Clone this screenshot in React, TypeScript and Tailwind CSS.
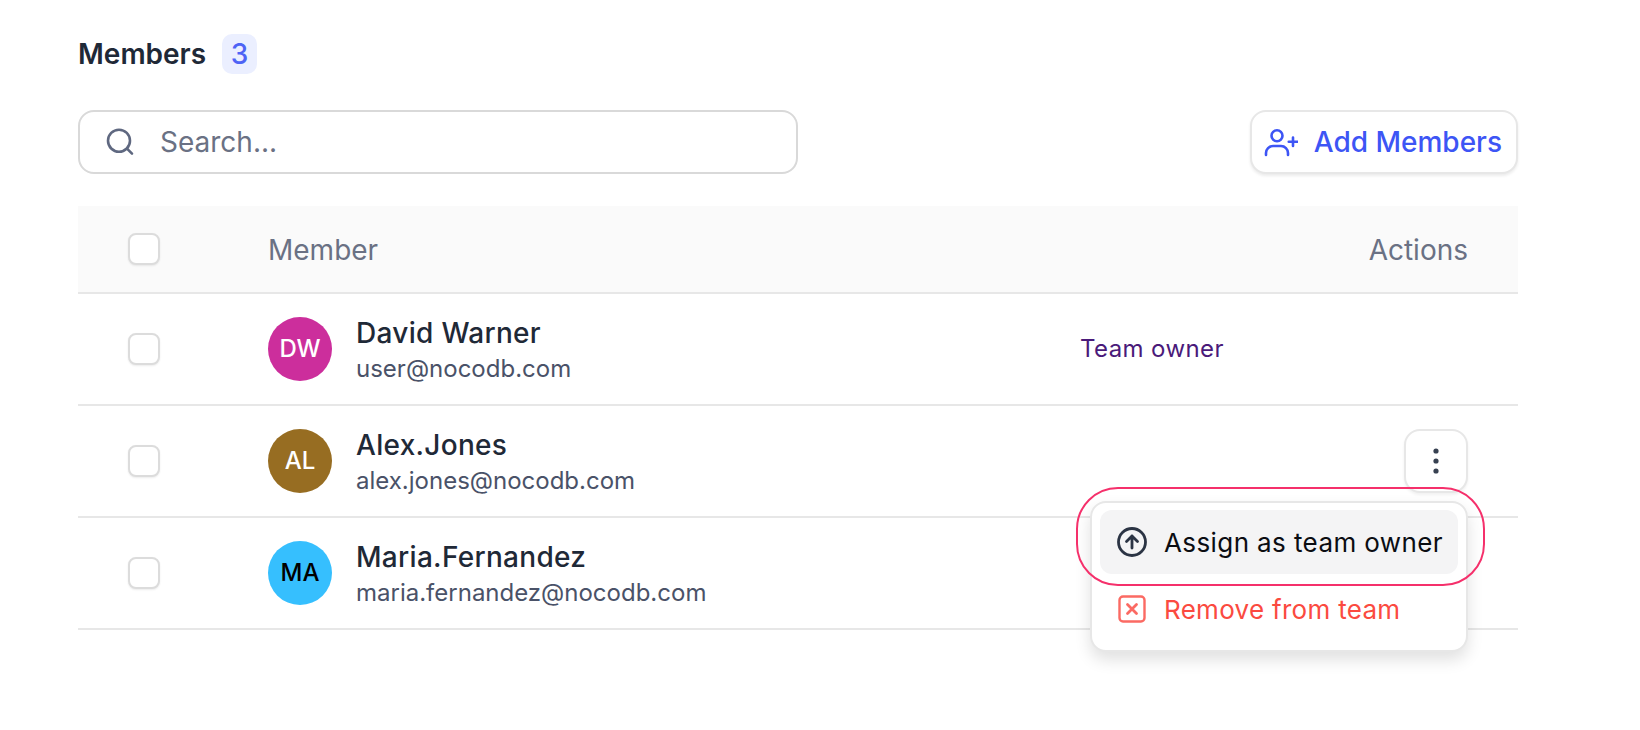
import React from "react";

const members = [
  { initials: "DW", name: "David Warner", email: "user@nocodb.com", avatar: "bg-[#cc2e9c] text-white", owner: true },
  { initials: "AL", name: "Alex.Jones", email: "alex.jones@nocodb.com", avatar: "bg-[#976d22] text-white", menu: true },
  { initials: "MA", name: "Maria.Fernandez", email: "maria.fernandez@nocodb.com", avatar: "bg-[#36bffe] text-black" },
];

const Checkbox = () => (
  <div className="w-8 h-8 rounded-[8px] border-2 border-[#dcdcdc] bg-white shadow-[0_1px_2px_rgba(0,0,0,0.08)]" />
);

const SearchIcon = () => (
  <svg width="30" height="30" viewBox="0 0 30 30" fill="none" stroke="#5f6880" strokeWidth="2.6" strokeLinecap="round">
    <circle cx="13" cy="13.700" r="11" />
    <path d="M21 21.700l5 5" />
  </svg>
);

const AddUserIcon = () => (
  <svg width="34" height="32" viewBox="0 0 34 32" fill="none" stroke="#3d55f5" strokeWidth="2.6" strokeLinecap="round">
    <circle cx="13" cy="9.700" r="5.500" />
    <path d="M2 29v-2a7 7 0 0 1 7-7h8a7 7 0 0 1 7 7v2" />
    <path d="M29 11.500v8.500M24.750 15.750h8.500" />
  </svg>
);

const Kebab = () => (
  <svg width="6" height="28" viewBox="0 0 6 28" fill="#374151">
    <circle cx="3" cy="4" r="2.600" />
    <circle cx="3" cy="14" r="2.600" />
    <circle cx="3" cy="24" r="2.600" />
  </svg>
);

const ArrowUpIcon = () => (
  <svg width="32" height="32" viewBox="0 0 32 32" fill="none" stroke="#2b3444" strokeWidth="2.800" strokeLinecap="round" strokeLinejoin="round">
    <circle cx="16" cy="16" r="13.500" />
    <path d="M16 22v-12M10.500 15.500L16 10l5.500 5.500" />
  </svg>
);

const RemoveIcon = () => (
  <svg width="28" height="28" viewBox="0 0 28 28" fill="none" stroke="#fb6a63" strokeWidth="2.400" strokeLinecap="round">
    <rect x="1.500" y="1.500" width="25" height="25" rx="3.500" />
    <path d="M9.500 9.500l9 9M18.500 9.500l-9 9" strokeWidth="2.800" />
  </svg>
);

export default function App() {
  return (
    <div className="relative w-[1640px] h-[730px] overflow-hidden bg-white pl-[78px] pt-[34px] font-['Inter',sans-serif]">
      <div className="w-[1440px]">
        <div className="flex items-center h-[39px] gap-4">
          <h2 className="text-[28px] font-semibold text-[#1f2937]">Members</h2>
          <span className="flex items-center justify-center w-[35px] h-[40px] rounded-[10px] bg-[#ebefff] text-[28px] font-medium text-[#4e63f5]">3</span>
        </div>

        <div className="flex items-center justify-between mt-[37px]">
          <div className="flex items-center w-[720px] h-[64px] rounded-[16px] border-2 border-[#d9d9d9] pl-[26px] gap-[24px]">
            <SearchIcon />
            <span className="text-[28px] text-[#6a7184]">Search...</span>
          </div>
          <button className="flex items-center h-[64px] rounded-[16px] border-2 border-[#e7e7e7] bg-white pl-[12px] pr-[14px] gap-[16px] shadow-[0_2px_3px_rgba(0,0,0,0.08)] text-[28px] font-medium text-[#3d55f5]">
            <AddUserIcon />
            Add Members
          </button>
        </div>

        <div className="mt-[32px]">
          <div className="flex items-center h-[88px] bg-[#fafafa] border-b-2 border-[#e7e7e7] pl-[50px] pr-[50px] text-[28px] text-[#6a7184]">
            <Checkbox />
            <span className="ml-[108px] flex-1 pt-[2px]">Member</span>
            <span className="pt-[2px]">Actions</span>
          </div>
          {members.map((m) => (
            <div key={m.email} className="flex items-center h-[112px] border-b-2 border-[#e7e7e7] pl-[50px] pr-[50px]">
              <Checkbox />
              <div className={`ml-[108px] flex items-center justify-center w-[64px] h-[64px] rounded-full text-[24px] font-medium ${m.avatar}`}>
                {m.initials}
              </div>
              <div className="ml-[24px] w-[724px] pt-[4px]">
                <div className="text-[28px] leading-[36px] tracking-[0.3px] font-medium text-[#1f2937]">{m.name}</div>
                <div className="text-[24px] leading-[36px] text-[#4a5268]">{m.email}</div>
              </div>
              {m.owner && <span className="text-[24px] tracking-[0.4px] text-[#4a1a7a]">Team owner</span>}
              {m.menu && (
                <div className="ml-auto flex items-center justify-center w-[64px] h-[64px] rounded-[16px] border-2 border-[#e7e7e7] bg-white shadow-[0_2px_3px_rgba(0,0,0,0.06)]">
                  <Kebab />
                </div>
              )}
            </div>
          ))}
        </div>
      </div>

      {/* dropdown opened from the kebab button */}
      <div className="absolute left-[1090px] top-[501px] w-[378px] h-[151px] rounded-[16px] border-2 border-[#e7e7e7] bg-white px-[8px] pt-[7px] shadow-[0_8px_16px_rgba(0,0,0,0.12)]">
        <div className="flex items-center h-[64px] rounded-[12px] bg-[#f4f4f5] pl-[16px] gap-[16px] text-[26px] tracking-[0.4px] text-[#0b0d12]">
          <ArrowUpIcon />
          Assign as team owner
        </div>
        <div className="flex items-center h-[64px] mt-[3px] pl-[18px] gap-[18px] text-[26px] tracking-[0.3px] text-[#fb4a40]">
          <RemoveIcon />
          Remove from team
        </div>
      </div>

      {/* pink highlight around the first item */}
      <div className="absolute left-[1076px] top-[487px] w-[409px] h-[99px] rounded-[42px] border-2 border-[#f5306b]" />
    </div>
  );
}
